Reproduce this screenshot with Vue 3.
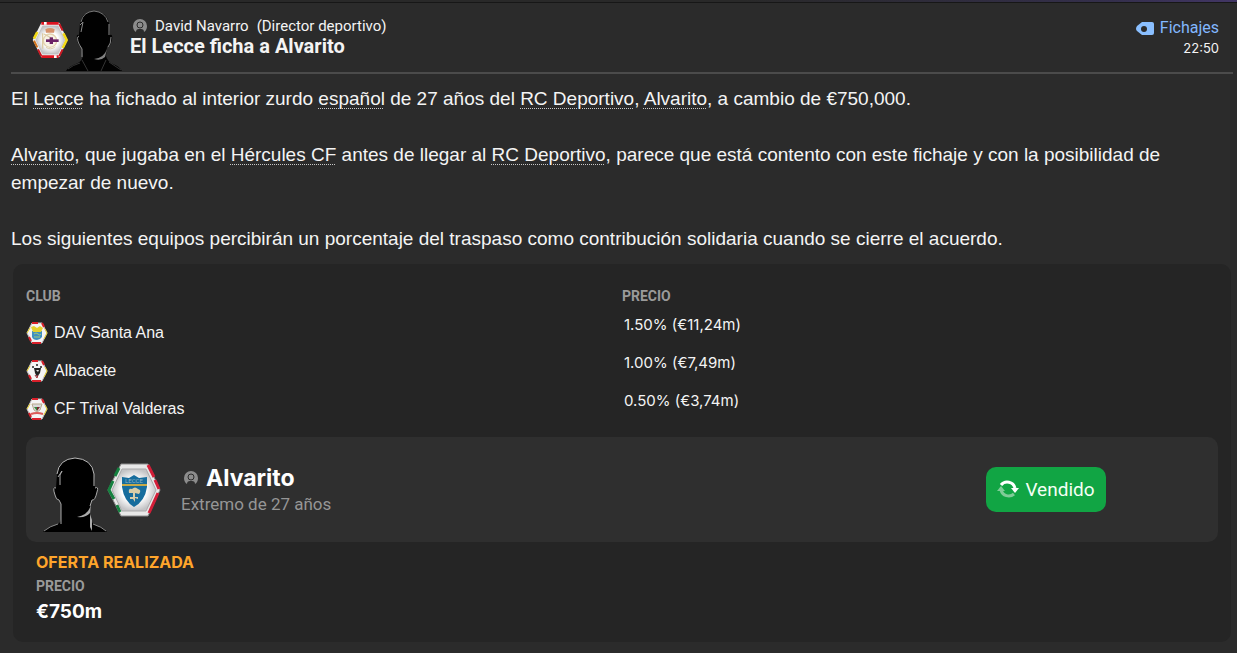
<script setup>
import { ref } from "vue";

const sender = { name: "David Navarro", role: "(Director deportivo)" };

const shares = ref([
  { id: "dav", club: "DAV Santa Ana", price: "1.50% (€11,24m)" },
  { id: "alb", club: "Albacete", price: "1.00% (€7,49m)" },
  { id: "tri", club: "CF Trival Valderas", price: "0.50% (€3,74m)" },
]);

const player = { name: "Alvarito", info: "Extremo de 27 años", status: "Vendido" };
</script>

<template>
  <main class="message">
    <div class="top-strip"></div>

    <header class="message-header">
      <svg class="club-badge" viewBox="0 0 54 54" aria-hidden="true">
        <defs>
          <radialGradient id="silver">
            <stop offset="0.55" stop-color="#ffffff" />
            <stop offset="1" stop-color="#c4c4c6" />
          </radialGradient>
        </defs>
        <path d="M14 1H41L53 27L41 53H14L1 27Z" fill="#eeeeee" />
        <path d="M14 2H40M40 52H14" stroke="#dc1420" stroke-width="4" />
        <path d="M18 2H22M33 52H37" stroke="#ffffff" stroke-width="4" />
        <path d="M41 3L46 13M46 41L41 51M9 41L14 51" fill="none" stroke="#c81822" stroke-width="3" />
        <path d="M47 17L52 27L46 39M8 15L3 25" stroke="#f2d916" stroke-width="4" fill="none" />
        <path d="M3 28L8 38" stroke="#d0731c" stroke-width="3" />
        <path d="M16 6H39L49 27L39 48H16L6 27Z" fill="url(#silver)" stroke="#b9b9bb" />
        <path d="M21 16L20 11Q27 7 34 11L33 16Z" fill="#d6926b" />
        <circle cx="27" cy="28" r="10" fill="#f8f3e6" stroke="#e3d3b0" stroke-width="2" />
        <path d="M16 17V40M18 18L29 24" stroke="#dccba4" stroke-width="2" />
        <path d="M21 28H40" stroke="#6b2266" stroke-width="4" />
        <path d="M29 23V33" stroke="#6b2266" stroke-width="5" />
        <path d="M21 38Q28 43 35 37" stroke="#cfb98b" fill="none" />
      </svg>
      <svg class="sender-photo" viewBox="0 0 56 61" aria-hidden="true">
        <path
          d="M0 61Q3 56 12 53Q16 51 17 46L16 37Q12 37 11 29Q10 24 13 25L14 13Q16 2 28 1Q41 2 43 13L44 25Q47 24 46 30Q44 37 41 37L40 46Q41 51 47 54Q53 56 56 61Z"
          fill="#010101"
        />
        <path d="M15 12Q17 2 28 1Q39 2 42 12" fill="none" stroke="#777777" stroke-width="1" />
        <path d="M14 15L17 12L15 22M13 26Q10 27 13 34L16 39V47M43 14V25M45 27Q45 34 42 37" fill="none" stroke="#888888" stroke-width="1" />
        <path d="M41 39Q38 48 28 49Q35 51 39 47Z" fill="#828282" />
        <path d="M16 50L22 61M40 50L35 61M2 59Q7 55 14 53M43 52L55 60" fill="none" stroke="#343434" />
      </svg>

      <div class="heading">
        <p class="sender">
          <svg class="person-icon" viewBox="0 0 14 14" aria-hidden="true">
            <path d="M3 13Q0 11 0 7A7 7 0 0 1 14 7Q14 11 11 13Q11 10 8 10H6Q3 10 3 13Z" />
            <circle class="head" cx="7" cy="6" r="3" />
          </svg>
          <span>{{ sender.name }}</span>
          <span>{{ sender.role }}</span>
        </p>
        <h1>El Lecce ficha a Alvarito</h1>
      </div>

      <div class="meta">
        <a href="#" class="category">
          <svg viewBox="0 0 18 13" aria-hidden="true">
            <path d="M6 0H16Q18 0 18 2V11Q18 13 16 13H6L1 9Q-1 7 1 4Z" />
            <circle cx="8" cy="7" r="3" fill="#2b2b2b" />
          </svg>
          Fichajes
        </a>
        <time>22:50</time>
      </div>
    </header>

    <article class="body">
      <p>
        El <a href="#">Lecce</a> ha fichado al interior zurdo <a href="#">español</a> de 27 años del
        <a href="#">RC Deportivo</a>, <a href="#">Alvarito</a>, a cambio de €750,000.
      </p>
      <p>
        <a href="#">Alvarito</a>, que jugaba en el <a href="#">Hércules CF</a> antes de llegar al
        <a href="#">RC Deportivo</a>, parece que está contento con este fichaje y con la posibilidad de
        empezar de nuevo.
      </p>
      <p>Los siguientes equipos percibirán un porcentaje del traspaso como contribución solidaria cuando se cierre el acuerdo.</p>
    </article>

    <section class="panel">
      <table>
        <thead>
          <tr>
            <th>CLUB</th>
            <th>PRECIO</th>
          </tr>
        </thead>
        <tbody>
          <tr v-for="share in shares" :key="share.id">
            <td>
              <div class="club">
                <svg viewBox="0 0 22 22" aria-hidden="true">
                  <path d="M6 1H16L21 11L16 21H6L1 11Z" fill="#f4f4f4" stroke="#c9c0c0" />
                  <path d="M6 1H12M16 1L18 5M6 21H15M3 15L5 19" stroke="#d8202a" stroke-width="2" />
                  <path d="M19 7L21 11L18 17M4 6L1 11" fill="none" stroke="#e8d32c" stroke-width="1" />
                  <g v-if="share.id === 'dav'">
                    <path d="M6 9H16V15Q14 18 11 18Q7 18 6 15Z" fill="#3f8fc0" />
                    <path d="M5 5L8 4L11 6L14 4L17 6L15 10H7Z" fill="#e4d02d" />
                    <path d="M8 12Q10 10 12 12T15 12M8 15H14" fill="none" stroke="#9ec87a" />
                  </g>
                  <g v-else-if="share.id === 'alb'">
                    <path d="M8 8H15L14 13L11 17L9 13Z" fill="#222222" />
                    <circle cx="7" cy="7" r="1" fill="#222222" />
                    <circle cx="11" cy="5" r="1" fill="#222222" />
                    <circle cx="15" cy="7" r="1" fill="#222222" />
                    <path d="M10 10H13L12 12Z" fill="#dddddd" />
                    <path d="M9 15L11 18L12 15" fill="none" stroke="#a42b34" />
                  </g>
                  <g v-else>
                    <path d="M6 6H16L14 12L11 14L8 12Z" fill="#dadada" stroke="#b8a98d" />
                    <path d="M8 9H11V13Z" fill="#37863f" />
                    <path d="M11 9H14L11 13Z" fill="#7a2a2c" />
                    <path d="M5 16Q11 14 17 16" fill="none" stroke="#db5b58" stroke-width="2" />
                  </g>
                </svg>
                {{ share.club }}
              </div>
            </td>
            <td class="price">{{ share.price }}</td>
          </tr>
        </tbody>
      </table>

      <div class="player-card">
        <svg class="player-photo" viewBox="0 0 64 75" aria-hidden="true">
          <path
            d="M0 75Q4 71 13 68Q18 66 18 62V47L16 43Q12 42 11 34Q9 29 13 31L14 17Q16 2 32 1Q49 2 51 17L52 31Q56 29 54 35Q52 44 49 43L47 49V61Q48 66 54 69Q61 71 64 75Z"
            fill="#000000"
          />
          <path d="M14 17Q16 2 32 1Q49 2 51 17V29" fill="none" stroke="#b9b9b9" stroke-width="1" />
          <path d="M15 20L19 14L17 18V28M13 31Q9 29 12 38Q13 43 16 43L18 47V67M52 31Q56 29 54 35Q52 44 49 43L47 49" fill="none" stroke="#aaaaaa" stroke-width="1" />
          <path d="M48 47Q46 58 34 60Q43 61 47 56V70L49 74V63L47 57Z" fill="#aaaaaa" />
          <path d="M1 74Q7 69 15 67M50 67Q59 70 63 74" fill="none" stroke="#888888" />
        </svg>
        <svg class="lecce-badge" viewBox="0 0 54 54" aria-hidden="true">
          <path d="M14 1H41L53 27L41 53H14L1 27Z" fill="#e8e8e8" stroke="#8c8c8c" />
          <path d="M12 5L8 13M6 18L2 27L7 36M10 42L13 49" fill="none" stroke="#15803f" stroke-width="3" />
          <path d="M41 2L47 14M48 17L52 26M51 30L42 50" fill="none" stroke="#d31e38" stroke-width="3" />
          <path d="M15 6H39L49 27L39 48H15L5 27Z" fill="url(#silver)" stroke="#a9a9aa" />
          <path d="M15 14L22 15L27 12L32 15L40 14V24Q38 38 27 44Q17 38 15 24Z" fill="#176d9d" />
          <path d="M15 21H40V23H15Z" fill="#c7a947" />
          <text x="27" y="20" text-anchor="middle">LECCE</text>
          <path d="M22 30Q21 25 25 26Q28 23 31 26Q35 27 32 31L28 30V34H31V36L28 35V39L26 36H23V34H26V30Z" fill="#d8cda8" />
        </svg>
        <div class="player">
          <h2>
            <svg class="person-icon" viewBox="0 0 14 14" aria-hidden="true">
              <path d="M3 13Q0 11 0 7A7 7 0 0 1 14 7Q14 11 11 13Q11 10 8 10H6Q3 10 3 13Z" />
              <circle class="head" cx="7" cy="6" r="3" />
            </svg>
            {{ player.name }}
          </h2>
          <p>{{ player.info }}</p>
        </div>
        <button type="button" class="status">
          <svg viewBox="0 0 22 18" aria-hidden="true">
            <path d="M4 5A8 8 0 0 1 18 8" fill="none" stroke="#ffffff" stroke-width="3" />
            <path d="M14 8H22L18 13Z" fill="#ffffff" />
            <path d="M4 10A8 8 0 0 0 17 14" fill="none" stroke="#7fcc98" stroke-width="3" />
            <path d="M0 11H8L4 6Z" fill="#7fcc98" />
          </svg>
          {{ player.status }}
        </button>
      </div>

      <div class="offer">
        <h3>OFERTA REALIZADA</h3>
        <p class="offer-label">PRECIO</p>
        <p class="offer-price">€750m</p>
      </div>
    </section>
  </main>
</template>

<style>
body {
  margin: 0;
  background: #2b2b2b;
}
</style>

<style scoped>
.message {
  min-height: 100vh;
  box-sizing: border-box;
  background: #2b2b2b;
  color: #f4f4f4;
  font-family: Roboto, "Liberation Sans", sans-serif;
}

h1,
h2,
h3,
p {
  margin: 0;
}

h2,
h3,
time,
.price,
.offer-price {
  font-family: Inter, "Liberation Sans", sans-serif;
}

svg {
  display: block;
  flex: none;
}

.top-strip {
  height: 2px;
  background: linear-gradient(90deg, #292929 60%, #342f4c 90%, #423665);
  border-bottom: 1px solid #171717;
}

.message-header {
  display: flex;
  height: 69px;
  margin: 0 4px 0 11px;
  padding-left: 21px;
  border-bottom: 2px solid #4b4b4b;
}

.club-badge {
  width: 36px;
  height: 36px;
  margin-top: 19px;
}

.sender-photo {
  width: 56px;
  height: 61px;
  margin: 7px 0 0 -2px;
}

.heading {
  flex: 1;
  padding: 13px 0 0 8px;
}

.sender {
  display: flex;
  align-items: center;
  gap: 8px;
  padding-left: 3px;
  font-size: 15px;
  line-height: 20px;
}

.person-icon {
  width: 14px;
  height: 14px;
  fill: #8c8c8c;
}

.person-icon .head {
  stroke: #2b2b2b;
  stroke-width: 1px;
}

h1 {
  font-size: 20px;
  line-height: 20px;
}

.meta {
  display: flex;
  flex-direction: column;
  align-items: flex-end;
  padding: 15px 14px 0 0;
}

.category {
  display: flex;
  align-items: center;
  gap: 6px;
  color: #82b8ff;
  font-size: 16px;
  line-height: 20px;
  text-decoration: none;
}

.category svg {
  width: 18px;
  height: 13px;
  fill: #8abfff;
}

time {
  font-size: 13px;
  line-height: 20px;
}

.body {
  display: grid;
  gap: 28px;
  padding: 11px 40px 11px 11px;
  font-family: "Liberation Sans", Arial, sans-serif;
  font-size: 19px;
  line-height: 28px;
}

.body a {
  color: inherit;
  text-decoration: underline dotted #c8c8c8 1px;
  text-underline-offset: 3px;
}

.panel {
  margin: 0 6px 0 13px;
  padding: 13px;
  border-radius: 10px;
  background: #252525;
}

table {
  width: 100%;
  border-collapse: collapse;
  table-layout: fixed;
}

th {
  height: 38px;
  padding: 0;
  color: #9a9a9a;
  font-size: 14px;
  text-align: left;
}

td {
  height: 38px;
  padding: 0;
  font-size: 15px;
  line-height: 20px;
  vertical-align: top;
}

.club {
  display: flex;
  align-items: center;
  gap: 6px;
  padding-top: 7px;
  font-family: "Liberation Sans", Arial, sans-serif;
  font-size: 16px;
}

.club svg {
  width: 22px;
  height: 22px;
}

.price {
  padding-left: 2px;
}

.player-card {
  display: flex;
  align-items: center;
  margin-top: 8px;
  padding: 15px 112px 10px 17px;
  border-radius: 10px;
  background: #2f2f2f;
}

.player-photo {
  width: 64px;
  height: 75px;
  margin-top: 5px;
}

.lecce-badge {
  width: 54px;
  height: 54px;
  margin-bottom: 4px;
}

.lecce-badge text {
  fill: #8fb3c4;
  font-size: 6px;
}

.player {
  flex: 1;
  padding: 0 0 4px 20px;
}

h2 {
  display: flex;
  align-items: center;
  gap: 8px;
  padding-left: 3px;
  color: #ffffff;
  font-size: 23px;
  line-height: 28px;
}

.player p {
  color: #969696;
  font-size: 17px;
  line-height: 24px;
}

.status {
  display: flex;
  align-items: center;
  justify-content: center;
  gap: 6px;
  width: 120px;
  height: 45px;
  margin-bottom: 6px;
  padding: 0;
  border: 0;
  border-radius: 10px;
  background: #11a544;
  color: #f4fff4;
  font-family: inherit;
  font-size: 19px;
}

.status svg {
  width: 22px;
  height: 18px;
}

.offer {
  padding: 8px 10px 3px;
}

h3 {
  color: #ffa52b;
  font-size: 16px;
  line-height: 24px;
}

.offer-label {
  color: #9a9a9a;
  font-size: 14px;
  font-weight: bold;
  line-height: 24px;
}

.offer-price {
  color: #ffffff;
  font-size: 19px;
  font-weight: bold;
  line-height: 28px;
}
</style>
